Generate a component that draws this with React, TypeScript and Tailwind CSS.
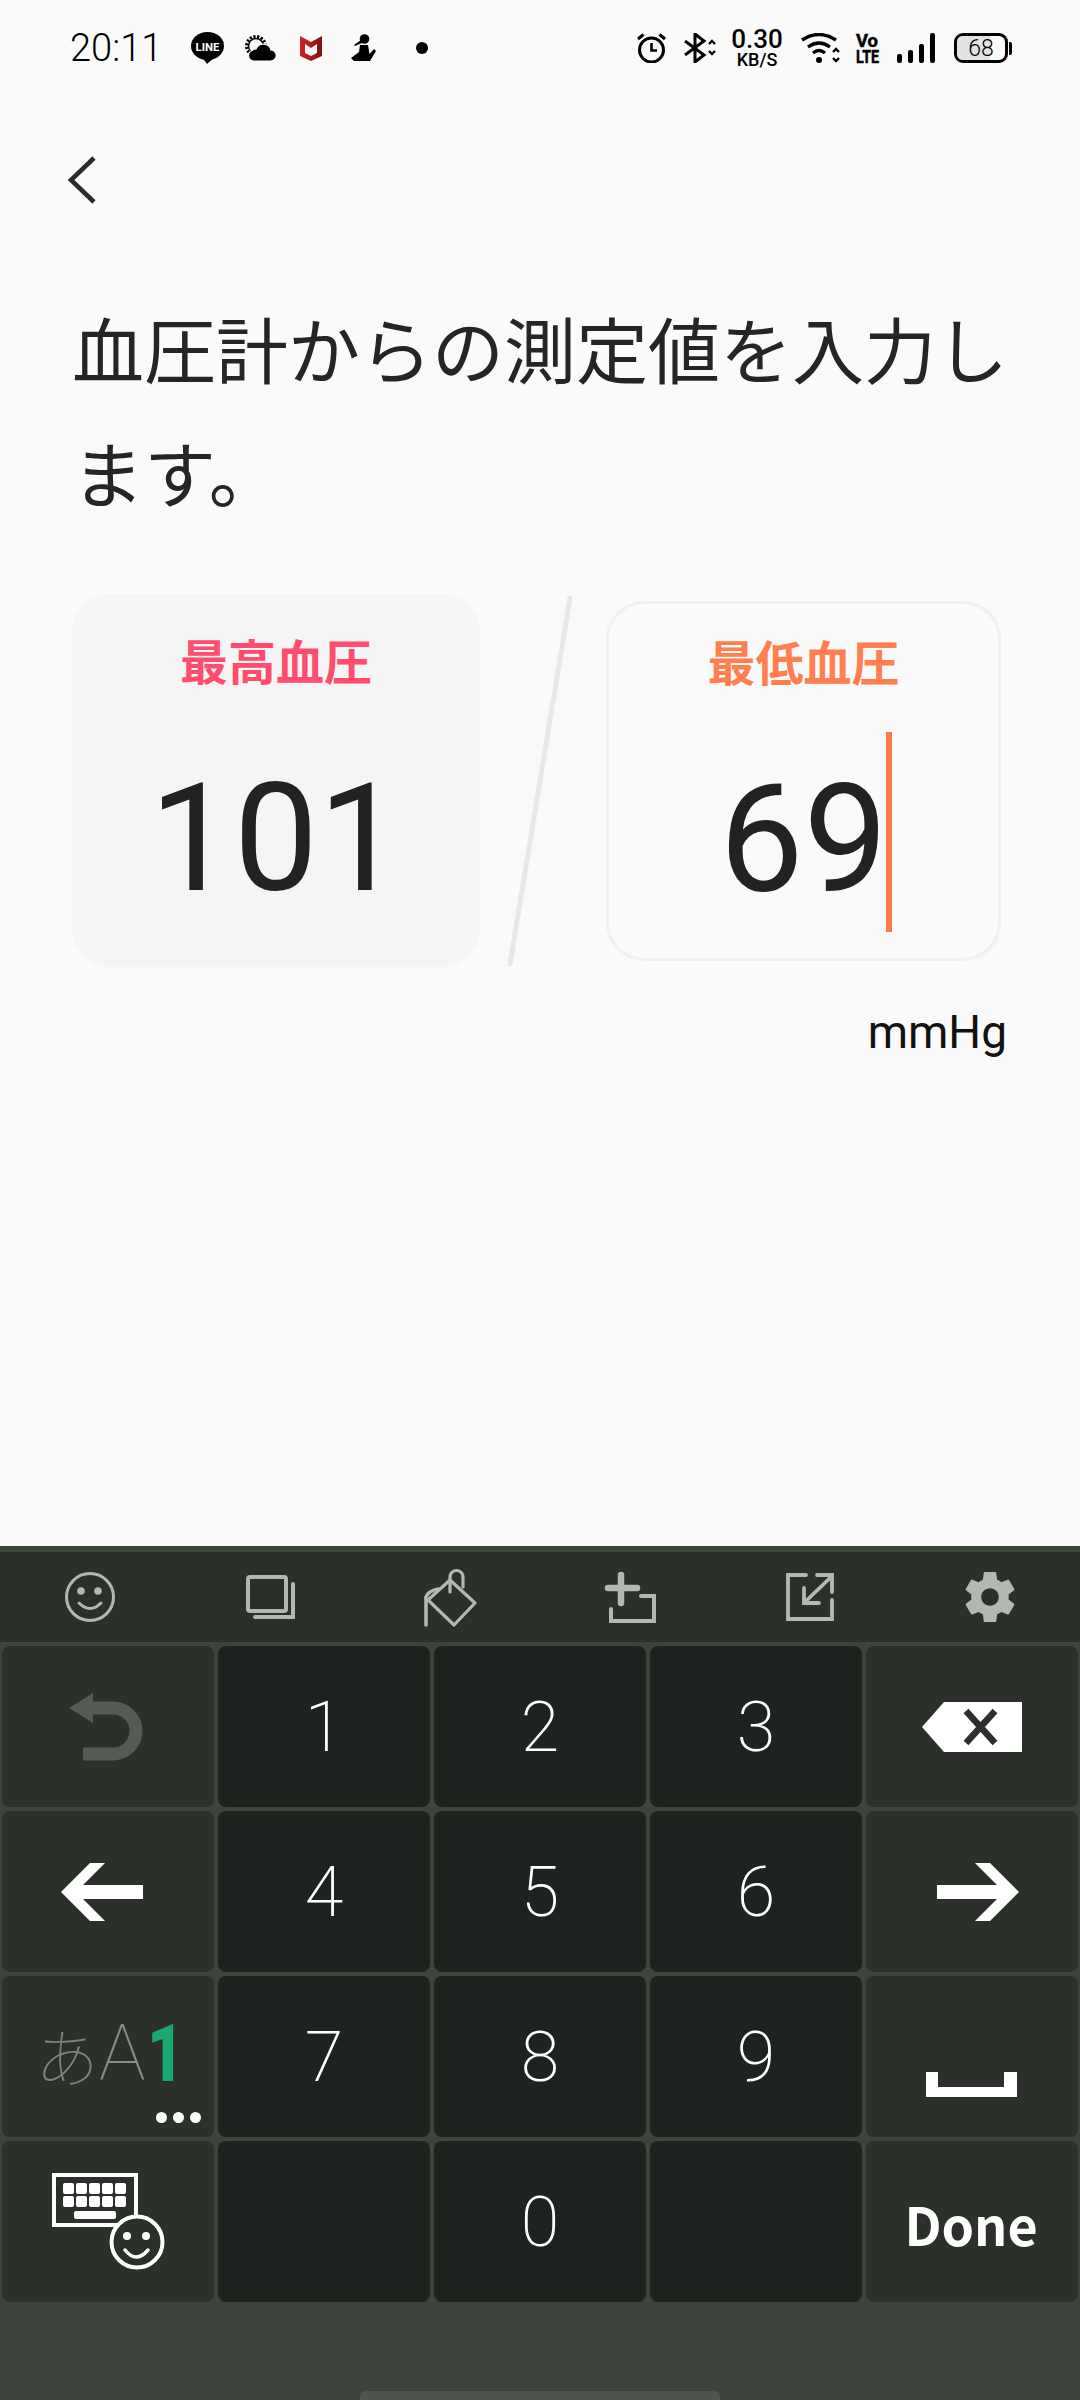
const CJK = "font-['Noto_Sans_CJK_JP','Noto_Sans',sans-serif]"

function LineIcon() {
  return (
    <svg width="33" height="32" viewBox="0 0 33 32" className="shrink-0">
      <ellipse cx="16.5" cy="14" rx="16.5" ry="14" fill="#000" />
      <path d="M11 25 L16 32 L24 25 Z" fill="#000" />
      <text x="16.5" y="18.5" textAnchor="middle" fontSize="11.5" fontWeight="700" fill="#fff" fontFamily="Roboto" textLength="24" lengthAdjust="spacingAndGlyphs">
        LINE
      </text>
    </svg>
  )
}

function WeatherIcon() {
  return (
    <svg width="31" height="28" viewBox="0 0 31 28" className="shrink-0">
      <circle cx="11" cy="12" r="9.5" fill="none" stroke="#000" strokeWidth="3" strokeDasharray="2.2 1.6" />
      <circle cx="11" cy="12" r="7.5" fill="#fafafa" stroke="#000" strokeWidth="1.5" />
      <path d="M8 27 a5.5 5.5 0 0 1 -1 -10.5 a6 6 0 0 1 4 -1.5 a8 8 0 0 1 15 1 a5.5 5.5 0 0 1 -0.5 11 Z" fill="#000" stroke="#fafafa" strokeWidth="1.2" />
    </svg>
  )
}

function ShieldIcon() {
  return (
    <svg width="22" height="25" viewBox="0 0 22 25" className="shrink-0">
      <defs>
        <linearGradient id="shield" x1="0" x2="1" y1="0" y2="0">
          <stop offset="0" stopColor="#cf2228" />
          <stop offset="1" stopColor="#7d1515" />
        </linearGradient>
      </defs>
      <path fillRule="evenodd" d="M0 0 L11 6 L22 0 V20 L11 25 L0 20 Z M5 8 V17 L11 20 L17 17 V8 L11 12 Z" fill="url(#shield)" />
    </svg>
  )
}

function FigureIcon() {
  return (
    <svg width="25" height="28" viewBox="0 0 25 28" className="shrink-0">
      <circle cx="13.5" cy="5" r="4.8" fill="#000" />
      <path d="M10 6 L3 11 L4 12 L11 9 Z" fill="#000" />
      <path d="M9 11 H17 L18.5 20 L23 15 L25 17 L19 27 H3 L0 24 L8 18 Z" fill="#000" />
    </svg>
  )
}

function AlarmIcon() {
  return (
    <svg width="29" height="30" viewBox="0 0 29 30" fill="none" stroke="#000" className="shrink-0">
      <circle cx="14.5" cy="17" r="12" strokeWidth="3" />
      <path d="M14.5 10 V17.5 H20" strokeWidth="2.6" />
      <path d="M1 6 L6.5 1.5 M28 6 L22.5 1.5" strokeWidth="3" />
    </svg>
  )
}

function BluetoothIcon() {
  return (
    <svg width="33" height="30" viewBox="0 0 33 30" fill="none" stroke="#000" className="shrink-0">
      <path d="M1 8 L20 22 L11 29 V1 L20 8 L1 22" strokeWidth="3" />
      <path d="M25 11 L28 8 L31 11 M25 18 L28 21 L31 18" strokeWidth="2.4" />
    </svg>
  )
}

function WifiIcon() {
  return (
    <svg width="40" height="30" viewBox="0 0 40 30" fill="none" stroke="#000" className="shrink-0">
      <path d="M1 7 Q18 -4 35 7" strokeWidth="3.4" />
      <path d="M7 14 Q18 6 29 14" strokeWidth="3.4" />
      <path d="M12 20 Q18 15 24 20" strokeWidth="3.2" />
      <circle cx="18" cy="27" r="3" fill="#000" stroke="none" />
      <path d="M32 19 L35 16 L38 19 M32 25 L35 28 L38 25" strokeWidth="2.4" />
    </svg>
  )
}

function VolteIcon() {
  return (
    <svg width="23" height="30" viewBox="0 0 23 30" className="shrink-0 overflow-visible">
      <text x="0" y="14" fontSize="19" fontWeight="700" fontFamily="Roboto" stroke="#000" strokeWidth="0.5" textLength="22" lengthAdjust="spacingAndGlyphs">Vo</text>
      <text x="0" y="30" fontSize="19" fontWeight="700" fontFamily="Roboto" stroke="#000" strokeWidth="0.5" textLength="23" lengthAdjust="spacingAndGlyphs">LTE</text>
    </svg>
  )
}

function StatusBar() {
  return (
    <div className="flex h-[96px] shrink-0 items-center justify-between pl-[70px] pr-[68px] text-black">
      <div className="flex items-center">
        <span className="w-[88px] font-['Roboto',sans-serif] text-[38px] leading-none font-light whitespace-nowrap">20:11</span>
        <div className="ml-[33px]"><LineIcon /></div>
        <div className="ml-[21px]"><WeatherIcon /></div>
        <div className="ml-[24px]"><ShieldIcon /></div>
        <div className="ml-[29px]"><FigureIcon /></div>
        <div className="ml-[40px] h-[12px] w-[12px] rounded-full bg-black" />
      </div>
      <div className="flex items-center">
        <AlarmIcon />
        <div className="ml-[18px]"><BluetoothIcon /></div>
        <div className="ml-[15px] flex w-[50px] flex-col items-center font-['Roboto',sans-serif]">
          <span className="text-[26px] leading-[23px] font-medium">0.30</span>
          <span className="text-[18px] leading-[17px] font-medium">KB/S</span>
        </div>
        <div className="ml-[19px]"><WifiIcon /></div>
        <div className="ml-[15px]"><VolteIcon /></div>
        <div className="ml-[18px] flex h-[30px] items-end gap-[6px]">
          <div className="h-[9px] w-[5px] rounded-[2px] bg-black" />
          <div className="h-[13px] w-[5px] rounded-[2px] bg-black" />
          <div className="h-[19px] w-[5px] rounded-[2px] bg-black" />
          <div className="h-[30px] w-[5px] rounded-[2px] bg-black" />
        </div>
        <div className="ml-[19px] flex items-center">
          <div className="relative flex h-[30px] w-[54px] items-center justify-center overflow-hidden rounded-[9px] border-[3px] border-black">
            <div className="absolute inset-y-0 left-0 w-[68%] bg-[#e2e2e2]" />
            <span className="relative font-['Roboto',sans-serif] text-[23px] leading-none font-light">68</span>
          </div>
          <div className="ml-[1px] h-[13px] w-[3px] rounded-r-[2px] bg-black" />
        </div>
      </div>
    </div>
  )
}

function ToolSmile() {
  return (
    <svg width="60" height="60" viewBox="0 0 60 60" fill="none" stroke="#b4b7b2">
      <circle cx="30" cy="30" r="23.5" strokeWidth="3" />
      <circle cx="21" cy="24" r="3.8" fill="#b4b7b2" stroke="none" />
      <circle cx="38" cy="24" r="3.8" fill="#b4b7b2" stroke="none" />
      <path d="M19 36 Q30 47 41 36" strokeWidth="3" strokeLinecap="round" />
    </svg>
  )
}

function ToolStack() {
  return (
    <svg width="60" height="60" viewBox="0 0 60 60" fill="none" stroke="#b4b7b2" strokeWidth="4" strokeLinecap="round">
      <rect x="8" y="10" width="38" height="34" rx="2" />
      <path d="M15 50 H53 V17" />
    </svg>
  )
}

function ToolBucket() {
  return (
    <svg width="60" height="60" viewBox="0 0 60 60" fill="none" stroke="#b4b7b2" strokeWidth="3.2" strokeLinecap="round" strokeLinejoin="round">
      <path d="M8 33 L30 13 L55 36 L34 58 Z" />
      <path d="M30 25 V10 a6.5 6.5 0 0 1 13 0 V20" />
      <path d="M6 58 V30 Q8 24 18 22" strokeWidth="3.6" />
    </svg>
  )
}

function ToolAdd() {
  return (
    <svg width="60" height="60" viewBox="0 0 60 60" fill="none" stroke="#b4b7b2" strokeLinecap="round">
      <path d="M8 21 H37 M21 8 V36" strokeWidth="6.5" />
      <path d="M41 29 H54 V54 H11 V42" strokeWidth="4" />
    </svg>
  )
}

function ToolExpand() {
  return (
    <svg width="60" height="60" viewBox="0 0 60 60" fill="none" stroke="#b4b7b2" strokeWidth="3.8" strokeLinecap="round">
      <path d="M26 8 H8 V52 H52 V33" />
      <path d="M37 8 H52 V25" />
      <path d="M51 10 L24 36" />
      <path d="M24 21 V36 H39" />
    </svg>
  )
}

function ToolGear() {
  return (
    <svg width="60" height="60" viewBox="0 0 24 24" fill="#b4b7b2">
      <path d="M19.43 12.98c.04-.32.07-.64.07-.98s-.03-.66-.07-.98l2.11-1.65c.19-.15.24-.42.12-.64l-2-3.46c-.12-.22-.39-.3-.61-.22l-2.49 1c-.52-.4-1.08-.73-1.69-.98l-.38-2.65C14.46 2.18 14.25 2 14 2h-4c-.25 0-.46.18-.49.42l-.38 2.65c-.61.25-1.17.59-1.69.98l-2.49-1c-.23-.09-.49 0-.61.22l-2 3.46c-.13.22-.07.49.12.64l2.11 1.65c-.04.32-.07.65-.07.98s.03.66.07.98l-2.11 1.65c-.19.15-.24.42-.12.64l2 3.46c.12.22.39.3.61.22l2.49-1c.52.4 1.08.73 1.69.98l.38 2.65c.03.24.24.42.49.42h4c.25 0 .46-.18.49-.42l.38-2.65c.61-.25 1.17-.59 1.69-.98l2.49 1c.23.09.49 0 .61-.22l2-3.46c.12-.22.07-.49-.12-.64l-2.11-1.65zM12 15.5c-1.93 0-3.5-1.57-3.5-3.5s1.57-3.5 3.5-3.5 3.5 1.57 3.5 3.5-1.57 3.5-3.5 3.5z" />
    </svg>
  )
}

function UndoIcon() {
  return (
    <svg width="80" height="70" viewBox="0 0 80 70" fill="none">
      <path d="M1 16 L25 1 V31 Z" fill="#555a56" />
      <path d="M22 16 H45 A23 23 0 0 1 45 62 H15" stroke="#555a56" strokeWidth="13" />
    </svg>
  )
}

function BackspaceIcon() {
  return (
    <svg width="100" height="50" viewBox="0 0 100 50">
      <path d="M0 25 L22 0 H100 V50 H22 Z" fill="#fff" />
      <path d="M44 9 L73 41 M73 9 L44 41" stroke="#2b302b" strokeWidth="6.5" />
    </svg>
  )
}

function ArrowIcon({ flip }: { flip?: boolean }) {
  return (
    <svg width="96" height="60" viewBox="0 0 96 60" className={flip ? "-scale-x-100" : ""}>
      <path d="M1 30 L30 1 H45 L23 23 H83 V37 H23 L45 59 H30 Z" fill="#fff" />
    </svg>
  )
}

function SpaceIcon() {
  return (
    <svg width="91" height="25" viewBox="0 0 91 25">
      <path d="M0 0 H12 V15 H78 V0 H91 V25 H0 Z" fill="#fff" />
    </svg>
  )
}

function KeyboardEmojiIcon() {
  const cols = [13, 26, 39, 52, 65]
  return (
    <svg width="116" height="103" viewBox="0 0 116 103">
      <rect x="4" y="5" width="82" height="50" fill="none" stroke="#fff" strokeWidth="4" />
      {cols.map((x) => (
        <rect key={x} x={x} y="13" width="11" height="11" rx="2" fill="#fff" />
      ))}
      {cols.map((x) => (
        <rect key={x} x={x} y="26" width="11" height="11" rx="2" fill="#fff" />
      ))}
      <rect x="24" y="41" width="42" height="8" rx="2" fill="#fff" />
      <circle cx="87" cy="72" r="25.5" fill="#2b302b" stroke="#fff" strokeWidth="4" />
      <circle cx="77" cy="66" r="4" fill="#fff" />
      <circle cx="96" cy="66" r="4" fill="#fff" />
      <path d="M75 80 Q86 94 98 80" fill="none" stroke="#fff" strokeWidth="3.5" strokeLinecap="round" />
    </svg>
  )
}

function Digit({ n }: { n?: string }) {
  return (
    <div className="flex items-center justify-center rounded-[8px] bg-[#1f231f] font-['Roboto',sans-serif] text-[70px] leading-none font-extralight text-white">
      {n}
    </div>
  )
}

function FnKey({ children, className }: { children?: React.ReactNode; className?: string }) {
  return <div className={"relative flex rounded-[8px] bg-[#2b302b] " + (className ?? "items-center justify-center")}>{children}</div>
}

function Keyboard() {
  return (
    <div className="flex h-[854px] shrink-0 flex-col bg-[#3d443c] pt-[6px]">
      <div className="grid h-[90px] shrink-0 grid-cols-6 items-center justify-items-center bg-[#2b302b]">
        <ToolSmile />
        <ToolStack />
        <ToolBucket />
        <ToolAdd />
        <ToolExpand />
        <ToolGear />
      </div>
      <div className="grid grid-cols-5 auto-rows-[161px] gap-1 px-0.5 pt-1">
        <FnKey><UndoIcon /></FnKey>
        <Digit n="1" />
        <Digit n="2" />
        <Digit n="3" />
        <FnKey><BackspaceIcon /></FnKey>

        <FnKey><ArrowIcon /></FnKey>
        <Digit n="4" />
        <Digit n="5" />
        <Digit n="6" />
        <FnKey><ArrowIcon flip /></FnKey>

        <FnKey className="items-start pl-[33px] pt-[38px]">
          <span className={CJK + " w-[64px] text-[64px] leading-[80px] font-thin text-[#7f817e]"}>あ</span>
          <span className="font-['Roboto',sans-serif] text-[78px] leading-[80px] font-thin text-[#8a8c89]">A</span>
          <span className="ml-[1px] inline-block origin-left scale-x-[0.8] font-['Roboto',sans-serif] text-[80px] leading-[80px] font-black text-[#18a870]">1</span>
          <div className="absolute bottom-[14px] right-[13px] flex gap-[6px]">
            <div className="h-[11px] w-[11px] rounded-full bg-white" />
            <div className="h-[11px] w-[11px] rounded-full bg-white" />
            <div className="h-[11px] w-[11px] rounded-full bg-white" />
          </div>
        </FnKey>
        <Digit n="7" />
        <Digit n="8" />
        <Digit n="9" />
        <FnKey className="items-end justify-center pb-[40px] pr-[2px]"><SpaceIcon /></FnKey>

        <FnKey><KeyboardEmojiIcon /></FnKey>
        <Digit />
        <Digit n="0" />
        <Digit />
        <FnKey className="items-center justify-center pl-[-1px] pr-[2px] pt-[5px]">
          <span className={CJK + " text-[52px] leading-none font-bold text-white"}>Done</span>
        </FnKey>
      </div>
      <div className="mx-auto mt-auto h-[9px] w-[360px] rounded-t-[6px] bg-[#4f544d]" />
    </div>
  )
}

export default function App() {
  return (
    <div className="flex h-[2400px] w-[1080px] flex-col overflow-hidden bg-[#fafafa]">
      <StatusBar />
      <div className="flex-1">
        <svg width="30" height="48" viewBox="0 0 30 48" fill="none" stroke="#2a2a2a" strokeWidth="4.5" className="ml-[67px] mt-[60px]">
          <path d="M27 2 L4 24 L27 46" />
        </svg>
        <h1 className={CJK + " ml-[72px] mt-[81px] w-[940px] text-[72px] leading-[124px] font-normal text-[#252525]"}>
          血圧計からの測定値を入力します。
        </h1>
        <div className="ml-[72px] mt-[61px] flex items-center">
          <div className="flex h-[373px] w-[408px] flex-col items-center rounded-[38px] bg-[#f5f5f5] pt-[41px]">
            <span className={CJK + " text-[48px] leading-[48px] font-bold text-[#ff4d6d]"}>最高血圧</span>
            <span className="mt-[80px] font-['Roboto',sans-serif] text-[150px] leading-[152px] text-[#222]">101</span>
          </div>
          <svg width="64" height="370" viewBox="0 0 64 370" className="ml-[28px]">
            <path d="M62 2 L2 368" stroke="#e8e8e8" strokeWidth="5" strokeLinecap="round" />
          </svg>
          <div className="ml-[34px] flex h-[360px] w-[395px] flex-col items-center rounded-[38px] border-[3px] border-[#f0f0f0] pt-[32px]">
            <span className={CJK + " text-[48px] leading-[48px] font-bold text-[#ff7f50]"}>最低血圧</span>
            <div className="relative mt-[80px]">
              <span className="font-['Roboto',sans-serif] text-[150px] leading-[152px] text-[#222]">69</span>
              <div className="absolute left-[167px] top-[-32px] h-[200px] w-[6px] bg-[#fa7a4a]" />
            </div>
          </div>
        </div>
        <p className="mr-[73px] mt-[42px] text-right font-['Roboto',sans-serif] text-[46px] leading-[46px] text-[#111]">mmHg</p>
      </div>
      <Keyboard />
    </div>
  )
}
